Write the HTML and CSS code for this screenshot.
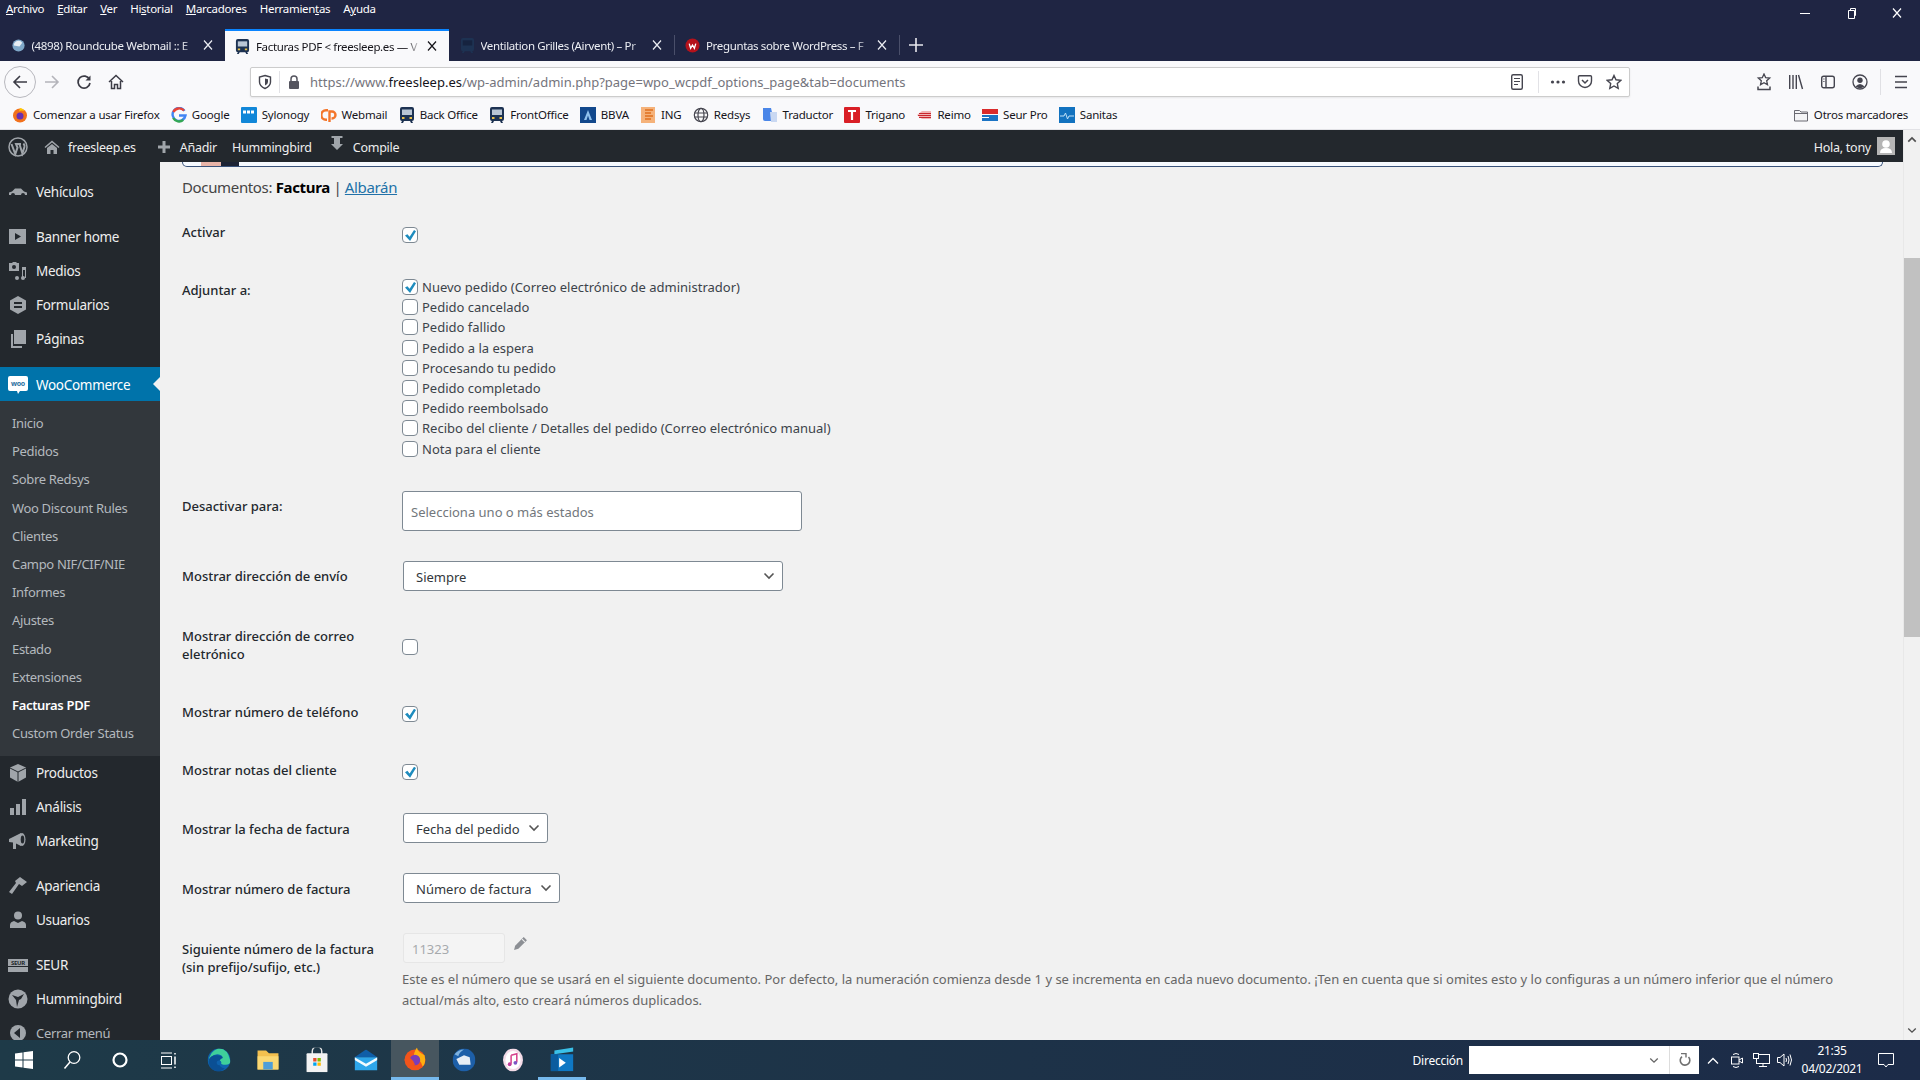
FILE: index.html
```html
<!DOCTYPE html>
<html lang="es">
<head>
  <meta charset="UTF-8">
  <title>Facturas PDF &lt; freesleep.es</title>
  <link rel="stylesheet" href="styles.css">
</head>
<body>
  <svg class="defs" width="0" height="0">
    <symbol id="i-x" viewBox="0 0 12 12"><path d="M2 1.500l8 9M10 1.500l-8 9" fill="none" stroke="currentColor" stroke-width="1.200"/></symbol>
    <symbol id="i-van" viewBox="0 0 16 16"><path d="M3 0h10q2 0 2 2v10q0 2-2 2l1 2h-2l-1-2H5l-1 2H2l1-2q-2 0-2-2V2q0-2 2-2z" fill="#1d3252"/><path d="M3 2.500h10v5.500H3z" fill="#b9c6d6"/><path d="M3 10h2.500v2H3zM10.500 10H13v2h-2.500z" fill="#e9c04a"/></symbol>
    <symbol id="i-van-dim" viewBox="0 0 16 16"><path d="M3 0h10q2 0 2 2v10q0 2-2 2l1 2h-2l-1-2H5l-1 2H2l1-2q-2 0-2-2V2q0-2 2-2z" fill="#1d3252"/><path d="M3 2.500h10v5.500H3z" fill="#16233f"/></symbol>
    <symbol id="i-chev" viewBox="0 0 12 8"><path d="M1.500 1.500L6 6l4.500-4.500" fill="none" stroke="currentColor" stroke-width="1.600"/></symbol>
  </svg>

  <div class="titlebar">
    <div class="menu-row">
      <span><u>A</u>rchivo</span>
      <span><u>E</u>ditar</span>
      <span><u>V</u>er</span>
      <span>Hi<u>s</u>torial</span>
      <span><u>M</u>arcadores</span>
      <span>Herramien<u>t</u>as</span>
      <span>A<u>y</u>uda</span>
      <div class="win-controls">
        <div class="win-btn"><svg width="10" height="10" viewBox="0 0 10 10"><path d="M0 5.500h10" stroke="#fff"/></svg></div>
        <div class="win-btn"><svg width="12" height="12" viewBox="0 0 12 12"><path d="M3.500 3.500h6v8h-6zM5.500 3.500v-2h5v7h-1" fill="none" stroke="#fff"/></svg></div>
        <div class="win-btn"><svg width="12" height="12"><use href="#i-x"/></svg></div>
      </div>
    </div>
    <div class="tab-row">
      <div class="tab">
        <svg class="fav" viewBox="0 0 16 16"><circle cx="8" cy="8" r="6.500" fill="#7fa8c9"/><path d="M3 8a5 5 0 0 1 9-3l-3 4z" fill="#e8eef4"/></svg>
        <span class="tab-title">(4898) Roundcube Webmail :: E</span>
        <svg class="tab-close" width="12" height="12"><use href="#i-x"/></svg>
      </div>
      <div class="tab active">
        <svg class="fav"><use href="#i-van"/></svg>
        <span class="tab-title">Facturas PDF &lt; freesleep.es — V</span>
        <svg class="tab-close" width="12" height="12"><use href="#i-x"/></svg>
      </div>
      <div class="tab">
        <svg class="fav"><use href="#i-van-dim"/></svg>
        <span class="tab-title">Ventilation Grilles (Airvent) – Pr</span>
        <svg class="tab-close" width="12" height="12"><use href="#i-x"/></svg>
      </div>
      <div class="tab-sep"></div>
      <div class="tab">
        <svg class="fav" viewBox="0 0 16 16"><circle cx="8" cy="8" r="7.500" fill="#b5121b"/><path d="M4.500 6l1.500 5 2-3.500 2 3.500 1.500-5" fill="none" stroke="#fff" stroke-width="1.400"/></svg>
        <span class="tab-title">Preguntas sobre WordPress – F</span>
        <svg class="tab-close" width="12" height="12"><use href="#i-x"/></svg>
      </div>
      <div class="tab-sep"></div>
      <svg class="new-tab" width="14" height="14" viewBox="0 0 14 14"><path d="M7 0v14M0 7h14" stroke="#e8e8ee" stroke-width="1.600"/></svg>
    </div>
  </div>

  <div class="toolbar">
    <div class="tb-btn back">
      <svg width="16" height="16" viewBox="0 0 16 16"><path d="M15 8H2M8 2L2 8l6 6" fill="none" stroke="#3b3b45" stroke-width="1.600"/></svg>
    </div>
    <div class="tb-btn">
      <svg width="16" height="16" viewBox="0 0 16 16"><path d="M1 8h13M8 2l6 6-6 6" fill="none" stroke="#b4b4ba" stroke-width="1.600"/></svg>
    </div>
    <div class="tb-btn">
      <svg width="16" height="16" viewBox="0 0 16 16"><path d="M13.500 5.500A6 6 0 1 0 14 9" fill="none" stroke="#3b3b45" stroke-width="1.700"/><path d="M14.500 1.500v5h-5z" fill="#3b3b45"/></svg>
    </div>
    <div class="tb-btn">
      <svg width="16" height="16" viewBox="0 0 16 16"><path d="M1 8l7-6.500L15 8M3.500 7v7.500h3v-4h3v4h3V7" fill="none" stroke="#3b3b45" stroke-width="1.500"/></svg>
    </div>
    <div class="urlbar">
      <svg width="16" height="16" viewBox="0 0 16 16"><path d="M8 1.500l5.500 1.500v5q0 4-5.500 6.500Q2.500 12 2.500 8V3z" fill="none" stroke="#45454f" stroke-width="1.400"/><path d="M8 4.500l3 .8V8q0 2-3 3.500z" fill="#45454f"/></svg>
      <div class="url-sep"></div>
      <svg class="lock" width="14" height="14" viewBox="0 0 14 14"><path d="M4 6V4a3 3 0 0 1 6 0v2" fill="none" stroke="#55555f" stroke-width="1.500"/><rect x="2" y="6" width="10" height="8" rx="1" fill="#55555f"/></svg>
      <span class="url-text">https://www.<b>freesleep.es</b>/wp-admin/admin.php?page=wpo_wcpdf_options_page&amp;tab=documents</span>
      <div class="url-actions">
        <svg width="16" height="18" viewBox="0 0 16 18"><rect x="2.700" y="1.700" width="10.600" height="14.600" rx="1.500" fill="none" stroke="#45454f" stroke-width="1.400"/><path d="M5 5.500h6M5 8.500h6M5 11.500h4" stroke="#45454f" stroke-width="1.200"/></svg>
        <div class="url-sep right"></div>
        <svg class="dots" width="16" height="16" viewBox="0 0 16 16"><g fill="#45454f"><circle cx="2.500" cy="8" r="1.600"/><circle cx="8" cy="8" r="1.600"/><circle cx="13.500" cy="8" r="1.600"/></g></svg>
        <svg class="pocket" width="16" height="16" viewBox="0 0 16 16"><path d="M2.500 1.700h11q1 0 1 1V7a6.500 6.500 0 0 1-13 0V2.700q0-1 1-1z" fill="none" stroke="#45454f" stroke-width="1.400"/><path d="M5 6l3 3 3-3" fill="none" stroke="#45454f" stroke-width="1.500"/></svg>
        <svg class="star" width="16" height="16" viewBox="0 0 16 16"><path d="M8 1.500l2 4.300 4.700.6-3.400 3.200.9 4.700L8 12l-4.200 2.300.9-4.700L1.300 6.400 6 5.800z" fill="none" stroke="#45454f" stroke-width="1.400"/></svg>
      </div>
    </div>
    <div class="tb-right">
      <div class="tb-btn"><svg width="16" height="18" viewBox="0 0 16 18"><path d="M8 1l1.700 3.700 4 .4-3 2.700.8 4L8 9.800l-3.500 2 .8-4-3-2.700 4-.4z" fill="none" stroke="#45454f" stroke-width="1.300"/><path d="M2 13.500v3h12v-3" fill="none" stroke="#45454f" stroke-width="1.500"/></svg></div>
      <div class="tb-btn"><svg width="16" height="16" viewBox="0 0 16 16"><path d="M1.700 1v14M5 1v14M8.300 1v14M10.500 1l4 14" fill="none" stroke="#45454f" stroke-width="1.400"/></svg></div>
      <div class="tb-btn"><svg width="16" height="16" viewBox="0 0 16 16"><rect x="1.700" y="2.200" width="12.600" height="11.600" rx="2" fill="none" stroke="#45454f" stroke-width="1.400"/><path d="M6 2.500v11" stroke="#45454f" stroke-width="1.400"/><path d="M3.300 5h1.200M3.300 7.500h1.200" stroke="#45454f"/></svg></div>
      <div class="tb-btn"><svg width="16" height="16" viewBox="0 0 16 16"><circle cx="8" cy="8" r="7" fill="none" stroke="#45454f" stroke-width="1.300"/><circle cx="8" cy="6.200" r="2.700" fill="#45454f"/><path d="M3.500 12.500q4.500-5 9 0Q8 16 3.500 12.500z" fill="#45454f"/></svg></div>
      <div class="tb-sep"></div>
      <div class="tb-btn"><svg width="16" height="14" viewBox="0 0 16 14"><path d="M2 1.500h12M2 7h12M2 12.500h12" stroke="#45454f" stroke-width="1.600"/></svg></div>
    </div>
  </div>

  <div class="bookmarks">
    <div class="bm"><svg viewBox="0 0 16 16"><circle cx="8" cy="8.500" r="7" fill="#f2711c"/><path d="M8 1q4 1 4 3-3-1-5 .5z" fill="#ffcb00"/><circle cx="8" cy="9" r="3.500" fill="#6a2fb0"/></svg>Comenzar a usar Firefox</div>
    <div class="bm"><svg viewBox="0 0 16 16"><path d="M13.500 3.800A6.500 6.500 0 1 0 14.500 8.500H8" fill="none" stroke="#4285f4" stroke-width="2.400"/><path d="M2.400 5A6.500 6.500 0 0 1 13 3.500" fill="none" stroke="#ea4335" stroke-width="2.400"/><path d="M2.200 11a6.500 6.500 0 0 0 10 1.800" fill="none" stroke="#34a853" stroke-width="2.400"/></svg>Google</div>
    <div class="bm"><svg viewBox="0 0 16 16"><rect width="16" height="16" rx="1" fill="#1187d8"/><path d="M2 5h12" stroke="#fff" stroke-width="3" stroke-dasharray="3 1"/></svg>Sylonogy</div>
    <div class="bm"><svg viewBox="0 0 16 16"><path d="M7 4.500H5a3.500 3.500 0 0 0 0 7h1v2.500H5A6 6 0 0 1 5 2h2z" fill="#f4762b"/><path d="M8.500 15V4.500H11a3 3 0 0 1 0 7h-.5" fill="none" stroke="#f4762b" stroke-width="2.400"/></svg>Webmail</div>
    <div class="bm"><svg><use href="#i-van"/></svg>Back Office</div>
    <div class="bm"><svg><use href="#i-van"/></svg>FrontOffice</div>
    <div class="bm"><svg viewBox="0 0 16 16"><rect width="16" height="16" fill="#12488c"/><path d="M4 13L8 3l4 10H9.500L8 8.500 6.500 13z" fill="#8fc1ee"/></svg>BBVA</div>
    <div class="bm"><svg viewBox="0 0 16 16"><rect x="1" width="14" height="16" fill="#f5b27a"/><path d="M5 3h8M5 6h6M5 9h8M5 12h6" stroke="#e0701e" stroke-width="1.500"/></svg>ING</div>
    <div class="bm"><svg viewBox="0 0 16 16"><g fill="none" stroke="#45454f" stroke-width="1.200"><circle cx="8" cy="8" r="6.700"/><ellipse cx="8" cy="8" rx="3" ry="6.700"/><path d="M1.500 6h13M1.500 10h13"/></g></svg>Redsys</div>
    <div class="bm"><svg viewBox="0 0 16 16"><path d="M1 1h8l3 13H3q-2 0-2-2z" fill="#4a86e8"/><path d="M8 5h7v10H9z" fill="#c9d8f2"/></svg>Traductor</div>
    <div class="bm"><svg viewBox="0 0 16 16"><rect width="16" height="16" rx="1" fill="#d91f26"/><path d="M4 4h8M8 4v9" stroke="#fff" stroke-width="2.200"/></svg>Trigano</div>
    <div class="bm"><svg viewBox="0 0 16 16"><path d="M1 8l5-4h9v8H6z" fill="#f0b4b4"/><path d="M3 6.500h12M2 8.500h13M3 10.500h12" stroke="#c8262c"/></svg>Reimo</div>
    <div class="bm"><svg viewBox="0 0 16 16"><rect y="2" width="16" height="5" fill="#d92b2b"/><rect y="8" width="16" height="6" fill="#1a73c4"/><path d="M0 10.500h7" stroke="#fff"/></svg>Seur Pro</div>
    <div class="bm"><svg viewBox="0 0 16 16"><rect width="16" height="16" fill="#1272bf"/><path d="M1 9h4l1.500-3 2 6 1.500-3h5" fill="none" stroke="#bfe0f7"/></svg>Sanitas</div>
    <div class="bm others"><svg viewBox="0 0 16 16"><path d="M1.500 3.500h5l1.500 1.500h6.500v9h-13z" fill="#f4f4f6" stroke="#6a6a72"/><path d="M1.500 6.500h13" stroke="#6a6a72"/></svg>Otros marcadores</div>
  </div>

  <div class="wp-area">
    <div class="wp-page">
      <div class="adminbar">
        <svg class="ab-logo" width="20" height="20" viewBox="0 0 20 20"><circle cx="10" cy="10" r="9" fill="none" stroke="#a0a5aa" stroke-width="1.500"/><path d="M3.500 7l3.800 10 2.200-6.500L8 7h5l-1.600 0 3 9.500 2-6.500q.5-2-1-3.500" fill="none" stroke="#a0a5aa" stroke-width="2"/></svg>
        <svg class="ab-home" width="16" height="16" viewBox="0 0 16 16"><path d="M0.500 8L8 1.500 15.500 8l-1 1L8 3.500 1.500 9z" fill="#a0a5aa"/><path d="M3 9l5-4 5 4v6h-3.500v-4h-3v4H3z" fill="#a0a5aa"/></svg>
        <span class="ab-site">freesleep.es</span>
        <svg class="ab-plus" width="14" height="14" viewBox="0 0 14 14"><path d="M7 1v12M1 7h12" stroke="#a0a5aa" stroke-width="3"/></svg>
        <span class="ab-new">Añadir</span>
        <span class="ab-hb">Hummingbird</span>
        <svg class="ab-pin" width="14" height="18" viewBox="0 0 14 18"><path d="M1.500 1h11v2h-11zM4 3h6v6h3l-6 6-6-6h3z" fill="#a0a5aa"/></svg>
        <span class="ab-compile">Compile</span>
        <span class="ab-hello">Hola, tony</span>
        <div class="ab-avatar"><svg width="18" height="18" viewBox="0 0 18 18"><rect width="18" height="18" fill="#b5b5b5"/><circle cx="9" cy="7" r="3.800" fill="#fff"/><path d="M3 16q0-5 6-5t6 5z" fill="#fff"/></svg></div>
      </div>

      <div class="wp-body">
        <nav class="sidebar">
          <a class="side-item sep-after"><svg viewBox="0 0 20 20"><path d="M1 13v-2.500l3-1 3-3h6l3 3 3 1V13h-2a2 2 0 0 0-4 0H7a2 2 0 0 0-4 0z" fill="#a0a5aa"/></svg>Vehículos</a>
          <a class="side-item"><svg viewBox="0 0 20 20"><rect x="1" y="2" width="17" height="15" fill="#a0a5aa"/><path d="M7 6l6 3.500-6 3.500z" fill="#23282d"/></svg>Banner home</a>
          <a class="side-item"><svg viewBox="0 0 20 20"><path d="M1 2h3l1-1h3l1 1h2v8H1z" fill="#a0a5aa"/><circle cx="6" cy="6" r="2" fill="#23282d"/><path d="M14 6h4v11h-1v-8h-2v8h-1z" fill="#a0a5aa"/><circle cx="15" cy="17" r="2" fill="#a0a5aa"/><circle cx="9" cy="17" r="2" fill="#a0a5aa"/></svg>Medios</a>
          <a class="side-item"><svg viewBox="0 0 20 20"><path d="M10 1l8 4.500v9L10 19l-8-4.500v-9z" fill="#a0a5aa"/><path d="M6 8h8M6 12h8" stroke="#23282d" stroke-width="2"/></svg>Formularios</a>
          <a class="side-item sep-after"><svg viewBox="0 0 20 20"><path d="M6 1h12v14H6z" fill="#a0a5aa"/><path d="M3 5v14h11v-2H5V5z" fill="#a0a5aa"/></svg>Páginas</a>
          <a class="side-item current">
            <svg viewBox="0 0 20 20"><path d="M2 1h16q2 0 2 2v11q0 2-2 2h-6l-2 3-1-3H2q-2 0-2-2V3q0-2 2-2z" fill="#fff"/><text x="10" y="11" class="woo-text">woo</text></svg>WooCommerce
          </a>
          <ul class="submenu">
            <li>Inicio</li>
            <li>Pedidos</li>
            <li>Sobre Redsys</li>
            <li>Woo Discount Rules</li>
            <li>Clientes</li>
            <li>Campo NIF/CIF/NIE</li>
            <li>Informes</li>
            <li>Ajustes</li>
            <li>Estado</li>
            <li>Extensiones</li>
            <li class="on">Facturas PDF</li>
            <li>Custom Order Status</li>
          </ul>
          <a class="side-item"><svg viewBox="0 0 20 20"><path d="M10 1l8 3.500v10L10 19l-8-4.500v-10z" fill="#a0a5aa"/><path d="M2 5l8 4 8-4M10 9v10" fill="none" stroke="#23282d"/></svg>Productos</a>
          <a class="side-item"><svg viewBox="0 0 20 20"><path d="M2 11h4v7H2zM8 7h4v11H8zM14 2h4v16h-4z" fill="#a0a5aa"/></svg>Análisis</a>
          <a class="side-item sep-after"><svg viewBox="0 0 20 20"><path d="M1 8l12-6v13L8 12.500V18H5v-6.500L1 11z" fill="#a0a5aa"/><ellipse cx="14" cy="8.500" rx="3.500" ry="6.500" fill="#a0a5aa"/><ellipse cx="14.500" cy="8.500" rx="1.800" ry="4" fill="#23282d"/></svg>Marketing</a>
          <a class="side-item"><svg viewBox="0 0 20 20"><path d="M12 1l7 5-5 4-3-2-7 10-3-2 7-9-1-2z" fill="#a0a5aa"/></svg>Apariencia</a>
          <a class="side-item sep-after"><svg viewBox="0 0 20 20"><circle cx="10" cy="5.500" r="4" fill="#a0a5aa"/><path d="M2 18v-3q0-3 4-4l4 2 4-2q4 1 4 4v3z" fill="#a0a5aa"/></svg>Usuarios</a>
          <a class="side-item"><svg viewBox="0 0 20 20"><rect y="4" width="20" height="7" fill="#a0a5aa"/><rect y="12" width="20" height="5" fill="#a0a5aa"/><text x="10" y="10" class="seur-text">SEUR</text></svg>SEUR</a>
          <a class="side-item"><svg viewBox="0 0 20 20"><circle cx="10" cy="10" r="9.500" fill="#a0a5aa"/><path d="M4 6l6 2 6-3-3 5-2 1-2 7-1-7z" fill="#23282d"/></svg>Hummingbird</a>
          <a class="side-item collapse"><svg viewBox="0 0 20 20"><circle cx="10" cy="10" r="8" fill="#a0a5aa"/><path d="M12 5v10l-6-5z" fill="#23282d"/></svg>Cerrar menú</a>
        </nav>

        <main class="content">
          <div class="notice"><span class="notice-pink"></span><span class="notice-dark"></span></div>
          <p class="doc-switch">Documentos: <b>Factura</b> | <a href="#">Albarán</a></p>

          <form class="settings">
            <div class="row">
              <label class="row-label">Activar</label>
              <div class="cell check-cell"><input type="checkbox" checked></div>
            </div>
            <div class="row">
              <label class="row-label">Adjuntar a:</label>
              <div class="cell attach-list">
                <label><input type="checkbox" checked>Nuevo pedido (Correo electrónico de administrador)</label>
                <label><input type="checkbox">Pedido cancelado</label>
                <label><input type="checkbox">Pedido fallido</label>
                <label><input type="checkbox">Pedido a la espera</label>
                <label><input type="checkbox">Procesando tu pedido</label>
                <label><input type="checkbox">Pedido completado</label>
                <label><input type="checkbox">Pedido reembolsado</label>
                <label><input type="checkbox">Recibo del cliente / Detalles del pedido (Correo electrónico manual)</label>
                <label><input type="checkbox">Nota para el cliente</label>
              </div>
            </div>
            <div class="row">
              <label class="row-label">Desactivar para:</label>
              <div class="cell multi-cell"><input class="multi" type="text" placeholder="Selecciona uno o más estados"></div>
            </div>
            <div class="row low">
              <label class="row-label">Mostrar dirección de envío</label>
              <div class="cell">
                <div class="select w-380"><select><option>Siempre</option></select><svg width="12" height="8"><use href="#i-chev"/></svg></div>
              </div>
            </div>
            <div class="row low">
              <label class="row-label">Mostrar dirección de correo<br>eletrónico</label>
              <div class="cell check-cell"><input type="checkbox"></div>
            </div>
            <div class="row low">
              <label class="row-label">Mostrar número de teléfono</label>
              <div class="cell check-cell"><input type="checkbox" checked></div>
            </div>
            <div class="row low">
              <label class="row-label">Mostrar notas del cliente</label>
              <div class="cell check-cell"><input type="checkbox" checked></div>
            </div>
            <div class="row lower">
              <label class="row-label">Mostrar la fecha de factura</label>
              <div class="cell">
                <div class="select w-145"><select><option>Fecha del pedido</option></select><svg width="12" height="8"><use href="#i-chev"/></svg></div>
              </div>
            </div>
            <div class="row lower">
              <label class="row-label">Mostrar número de factura</label>
              <div class="cell">
                <div class="select w-157"><select><option>Número de factura</option></select><svg width="12" height="8"><use href="#i-chev"/></svg></div>
              </div>
            </div>
            <div class="row lower">
              <label class="row-label">Siguiente número de la factura<br>(sin prefijo/sufijo, etc.)</label>
              <div class="cell">
                <div class="next-number">
                  <input type="text" value="11323" disabled>
                  <svg width="15" height="15" viewBox="0 0 14 14"><path d="M10 1l3 3-8 8-4 1 1-4z" fill="#8c8f94"/><path d="M8.500 3l2.500 2.500" stroke="#f1f1f1"/></svg>
                </div>
                <p class="desc">Este es el número que se usará en el siguiente documento. Por defecto, la numeración comienza desde 1 y se incrementa en cada nuevo documento. ¡Ten en cuenta que si omites esto y lo configuras a un número inferior que el número<br>actual/más alto, esto creará números duplicados.</p>
              </div>
            </div>
          </form>
        </main>
      </div>
    </div>

    <div class="scrollbar">
      <svg class="sb-arrow" width="10" height="7" viewBox="0 0 12 8"><path d="M1.500 6.500L6 2l4.500 4.500" fill="none" stroke="#505050" stroke-width="2"/></svg>
      <div class="sb-thumb"></div>
      <svg class="sb-arrow down" width="10" height="7"><use href="#i-chev"/></svg>
    </div>
  </div>

  <footer class="taskbar">
    <div class="task-slot"><svg width="18" height="18" viewBox="0 0 18 18"><path d="M0 2.500l7.500-1v7H0zM8.500 1.300L18 0v8.500H8.500zM0 9.500h7.500v7l-7.500-1zM8.500 9.500H18V18l-9.500-1.300z" fill="#fff"/></svg></div>
    <div class="task-slot"><svg width="18" height="20" viewBox="0 0 18 20"><circle cx="11" cy="7.500" r="5.800" fill="none" stroke="#fff" stroke-width="1.300"/><path d="M7 12L1.500 18.500" stroke="#fff" stroke-width="1.500"/></svg></div>
    <div class="task-slot"><svg width="16" height="16" viewBox="0 0 16 16"><circle cx="8" cy="8" r="6.500" fill="none" stroke="#fff" stroke-width="2.200"/></svg></div>
    <div class="task-slot"><svg width="17" height="17" viewBox="0 0 17 17"><path d="M1 1h11M1 16h11" stroke="#fff"/><rect x="1.500" y="4.500" width="10" height="8" fill="none" stroke="#fff"/><path d="M15 1v1.500M15 4.500v8M15 14.500V16" stroke="#fff" stroke-width="1.500"/></svg></div>
    <div class="task-apps">
      <div class="task-slot app"><svg width="24" height="24" viewBox="0 0 24 24"><circle cx="12" cy="12" r="12" fill="#0e62ad"/><path d="M24 13q0 4-5 4-5 0-6-3t3-5q-2-3-6-3-7 1-9 8Q2 3 11 0q10-1 13 13z" fill="#3fcf9a"/><path d="M1 13q1-6 8-6 6 0 7 3-4 1-4 5 0 5 6 6-3 3-8 3-8-1-9-11z" fill="#0a4f94"/><circle cx="12" cy="15" r="2.500" fill="#0e62ad"/></svg></div>
      <div class="task-slot app"><svg width="24" height="22" viewBox="0 0 24 22"><path d="M1 1h9l3 3h10v17H1z" fill="#f3c04f"/><path d="M1 7h22v14H1z" fill="#fbd873"/><rect x="7" y="13" width="10" height="8" fill="#4f9ed8"/></svg></div>
      <div class="task-slot app"><svg width="24" height="26" viewBox="0 0 24 26"><path d="M7 7V4a5 5 0 0 1 10 0v3" fill="none" stroke="#e8e8e8" stroke-width="1.500"/><rect x="1" y="6" width="22" height="20" rx="1" fill="#f3f3f3"/><path d="M8 11h3.500v3.500H8z" fill="#e74c2e"/><path d="M12.500 11H16v3.500h-3.500z" fill="#7fba00"/><path d="M8 15.500h3.500V19H8z" fill="#00a4ef"/><path d="M12.500 15.500H16V19h-3.500z" fill="#ffb900"/></svg></div>
      <div class="task-slot app"><svg width="24" height="22" viewBox="0 0 24 22"><path d="M12 0l12 8H0z" fill="#0f5ea8"/><path d="M0 8h24v14H0z" fill="#2ea6ea"/><path d="M0 8l12 7 12-7v3l-12 7-12-7z" fill="#f2fbff"/></svg></div>
      <div class="task-slot app active"><svg width="24" height="24" viewBox="0 0 24 24"><circle cx="12" cy="13" r="11" fill="#f2541b"/><path d="M14 0q1 5 8 8 2 8-2 12-2-8-9-9-1-5 3-11z" fill="#ffb00f"/><circle cx="12" cy="13" r="5.500" fill="#7a3db8"/><path d="M1 13q2-6 6-7-2 4 1 6t4 6q-5 2-9-1z" fill="#f2541b"/></svg></div>
      <div class="task-slot app"><svg width="24" height="24" viewBox="0 0 24 24"><circle cx="12" cy="12" r="12" fill="#1d5fa8"/><path d="M4 11l8-4 6 2 1 8H7z" fill="#e6edf5"/><path d="M2 6q4-5 10-5-5 3-6 7z" fill="#7fb2de"/></svg></div>
      <div class="task-slot app"><svg width="22" height="24" viewBox="0 0 22 24"><ellipse cx="11" cy="12" rx="10.500" ry="12" fill="#f4dce8"/><ellipse cx="11" cy="12" rx="8" ry="9.500" fill="#fff"/><path d="M9 7l6-1.500v9M9 7v9" fill="none" stroke="#d6418c" stroke-width="1.600"/><circle cx="7.500" cy="16.500" r="2" fill="#c13a9a"/><circle cx="13.500" cy="15" r="2" fill="#7a55c4"/></svg></div>
      <div class="task-slot app active"><svg width="24" height="26" viewBox="0 0 24 26"><path d="M4 4l20-3v4L4 8z" fill="#3ac0e8"/><rect y="8" width="24" height="18" fill="#0f78c4"/><path d="M0 8h8v18H0z" fill="#0b5c9e"/><path d="M9 12l7 5-7 5z" fill="#fff"/></svg></div>
    </div>
    <div class="tray">
      <span class="tray-label">Dirección</span>
      <div class="address">
        <svg class="addr-chev" width="10" height="7"><use href="#i-chev"/></svg>
        <div class="addr-reload"><svg width="12" height="14" viewBox="0 0 12 14"><path d="M9.500 4A4.800 4.800 0 1 1 3 3.600" fill="none" stroke="#707070" stroke-width="1.600"/><path d="M2 .5h5v4" fill="none" stroke="#707070" stroke-width="1.400"/></svg></div>
      </div>
      <div class="tray-icon"><svg width="12" height="7" viewBox="0 0 12 7"><path d="M1 6.500L6 1.500l5 5" fill="none" stroke="#fff" stroke-width="1.300"/></svg></div>
      <div class="tray-icon"><svg width="12" height="17" viewBox="0 0 12 17"><rect x=".5" y="5" width="7.500" height="7" fill="none" stroke="#fff"/><path d="M8 8l3.500-2v5L8 9M2 2.500q3-2 6 0M2 14.500q3 2 6 0" fill="none" stroke="#fff"/></svg></div>
      <div class="tray-icon"><svg width="17" height="14" viewBox="0 0 17 14"><rect x="3.500" y="1.500" width="13" height="9" fill="none" stroke="#fff"/><rect x=".5" y=".5" width="5" height="5" fill="#1b2b47" stroke="#fff"/><path d="M10 10.500v3M6 13.500h8" stroke="#fff"/></svg></div>
      <div class="tray-icon"><svg width="16" height="14" viewBox="0 0 16 14"><path d="M.5 4.500H3L7 1v12L3 9.500H.5z" fill="none" stroke="#fff"/><path d="M9 5q1 2 0 4M11 3q2 4 0 8M13 1.500q3 5.500 0 11" fill="none" stroke="#fff"/></svg></div>
      <div class="clock"><span>21:35</span><span>04/02/2021</span></div>
      <div class="notif"><svg width="16" height="15" viewBox="0 0 16 15"><path d="M.5.500h15v11H10l-2 2.500-2-2.500H.5z" fill="none" stroke="#fff"/></svg></div>
    </div>
  </footer>
</body>
</html>
```

FILE: styles.css
```css
:root {
  --title-bg: #1f2543;
  --toolbar-bg: #f9f9fb;
  --wp-dark: #23282d;
  --wp-sub: #32373c;
  --wp-blue: #0073aa;
  --wp-bg: #f1f1f1;
  --text: #23282d;
  --sans: "Noto Sans", "Open Sans", sans-serif;
}

* {
  box-sizing: border-box;
}

html, body {
  height: 100%;
}

body {
  margin: 0;
  display: flex;
  flex-direction: column;
  height: 1080px;
  overflow: hidden;
  font-family: var(--sans);
  font-size: 13px;
  color: var(--text);
  background: var(--wp-bg);
}

.defs {
  position: absolute;
}

svg {
  display: block;
  flex: none;
}

/* title bar + tabs */
.titlebar {
  height: 61px;
  flex: none;
  background: var(--title-bg);
  color: #fff;
  font-size: 11.5px;
}

.menu-row {
  height: 29px;
  display: flex;
  align-items: flex-start;
  gap: 13px;
  padding: 1px 0 0 6px;
  letter-spacing: -0.3px;
}

.win-controls {
  margin-left: auto;
  display: flex;
}

.win-btn {
  width: 46px;
  height: 24px;
  display: flex;
  align-items: center;
  justify-content: center;
}

.tab-row {
  height: 32px;
  display: flex;
  align-items: center;
  letter-spacing: -0.35px;
}

.tab {
  width: 224.5px;
  height: 32px;
  flex: none;
  display: flex;
  align-items: center;
  padding: 0 11px 0 10.5px;
  color: #eceef3;
}

.tab.active {
  background: var(--toolbar-bg);
  color: #15141a;
  border-top: 2px solid #0a84ff;
}

.fav {
  width: 15px;
  height: 15px;
  margin-right: 6px;
}

.tab-title {
  flex: 1;
  min-width: 0;
  white-space: nowrap;
  overflow: hidden;
  -webkit-mask-image: linear-gradient(to right, #000 90%, transparent);
  mask-image: linear-gradient(to right, #000 90%, transparent);
}

.tab-close {
  margin-left: 4px;
}

.tab-sep {
  width: 1px;
  height: 20px;
  background: #4a4f6a;
  flex: none;
}

.new-tab {
  margin-left: 9px;
}

/* nav toolbar */
.toolbar {
  height: 38px;
  flex: none;
  background: var(--toolbar-bg);
  display: flex;
  align-items: center;
  padding: 3px 0 0 4px;
}

.tb-btn {
  width: 32px;
  height: 32px;
  flex: none;
  display: flex;
  align-items: center;
  justify-content: center;
}

.tb-btn.back {
  border: 1px solid #b8b8be;
  border-radius: 50%;
}

.urlbar {
  width: 1380px;
  height: 30px;
  margin-left: 118px;
  flex: none;
  display: flex;
  align-items: center;
  padding: 0 7px 0 6px;
  background: #fff;
  border: 1px solid #ccc;
  border-radius: 2px;
  box-shadow: 0 1px 2px rgba(0,0,0,.08);
}

.url-sep {
  width: 1px;
  height: 22px;
  margin-left: 6px;
  background: #e2e2e6;
}

.url-sep.right {
  margin-left: 13px;
}

.lock {
  margin-left: 7px;
}

.url-text {
  margin-left: 9px;
  font-size: 13px;
  color: #74747c;
  white-space: nowrap;
}

.url-text b {
  color: #15141a;
  font-weight: 400;
}

.url-actions {
  margin-left: auto;
  display: flex;
  align-items: center;
}

.dots {
  margin-left: 11px;
}

.pocket {
  margin-left: 11px;
}

.star {
  margin-left: 13px;
}

.tb-right {
  margin-left: auto;
  padding-right: 3px;
  display: flex;
  align-items: center;
}

.tb-sep {
  width: 1px;
  height: 26px;
  margin: 0 4px;
  background: #e0e0e4;
}

/* bookmarks */
.bookmarks {
  height: 31px;
  flex: none;
  background: var(--toolbar-bg);
  border-bottom: 1px solid #e2e2e6;
  display: flex;
  align-items: center;
  padding: 1px 12px 0;
  gap: 11.3px;
  font-size: 11.5px;
  color: #15141a;
  letter-spacing: -0.2px;
  white-space: nowrap;
}

.bm {
  display: flex;
  align-items: center;
  gap: 5px;
}

.bm svg {
  width: 16px;
  height: 16px;
}

.bm.others {
  margin-left: auto;
}

/* wordpress area */
.wp-area {
  flex: 1;
  min-height: 0;
  display: flex;
}

.wp-page {
  flex: 1;
  min-width: 0;
  display: flex;
  flex-direction: column;
}

.adminbar {
  height: 32px;
  flex: none;
  background: var(--wp-dark);
  color: #eee;
  display: flex;
  align-items: center;
  padding: 2px 0 0 8px;
  font-size: 12.5px;
  letter-spacing: -0.25px;
}

.ab-home { margin-left: 16px; }
.ab-site { margin-left: 8px; }
.ab-plus { margin-left: 21px; }
.ab-new { margin-left: 9px; }
.ab-hb { margin-left: 15px; }
.ab-pin { margin-left: 18px; margin-top: -6px; }
.ab-compile { margin-left: 9px; }
.ab-hello { margin-left: auto; }

.ab-avatar {
  margin: -2px 8px 0 6px;
}

.wp-body {
  flex: 1;
  min-height: 0;
  display: flex;
}

.sidebar {
  width: 160px;
  flex: none;
  background: var(--wp-dark);
  padding-top: 13px;
  overflow: hidden;
}

.side-item {
  height: 34px;
  display: flex;
  align-items: center;
  padding-left: 8px;
  font-size: 13.5px;
  color: #eee;
  letter-spacing: -0.3px;
  white-space: nowrap;
}

.side-item svg {
  width: 20px;
  height: 20px;
  margin-right: 8px;
}

.sep-after {
  margin-bottom: 11px;
}

.side-item.current {
  position: relative;
  padding-top: 1px;
  background: var(--wp-blue);
  color: #fff;
}

.side-item.current::after {
  content: "";
  position: absolute;
  right: 0;
  top: 10px;
  border: 7px solid transparent;
  border-right-color: var(--wp-bg);
  border-left-width: 0;
}

.woo-text {
  font: 700 7px var(--sans);
  fill: #2a6f9e;
  text-anchor: middle;
}

.seur-text {
  font: 700 6px var(--sans);
  fill: #23282d;
  text-anchor: middle;
}

.side-item.collapse {
  color: #b4b9be;
  font-size: 13px;
}

.submenu {
  list-style: none;
  margin: 0;
  padding: 8px 0 8.5px;
  background: var(--wp-sub);
  color: #b4b9be;
  font-size: 13px;
  letter-spacing: -0.33px;
}

.submenu li {
  height: 28.2px;
  line-height: 28px;
  padding-left: 12px;
  white-space: nowrap;
}

.submenu .on {
  color: #fff;
  font-weight: 600;
}

/* content */
.content {
  flex: 1;
  min-width: 0;
  padding: 0 14px 0 22px;
  overflow: hidden;
}

.notice {
  height: 5px;
  display: flex;
  padding-left: 18px;
  background: #f6faff;
  border: 1px solid #39527a;
  border-top: 0;
  border-radius: 0 0 5px 5px;
  margin-right: 6px;
}

.notice-pink {
  width: 20px;
  background: #e8b4a8;
}

.notice-dark {
  width: 18px;
  background: #1c2233;
}

.doc-switch {
  margin: 10px 0 6px;
  font-size: 15px;
  line-height: 20px;
  color: #444;
  letter-spacing: -0.35px;
}

.doc-switch b {
  color: #000;
}

.doc-switch a {
  color: #2271a8;
}

.row {
  display: grid;
  grid-template-columns: 220px 1fr;
}

.row-label {
  padding: 20px 0;
  line-height: 18px;
  font-weight: 500;
  white-space: nowrap;
}

.row.low .row-label {
  padding: 21px 0 19px;
}

.row.lower .row-label {
  padding: 22px 0 18px;
}

.cell {
  padding: 15px 0 15px 1px;
}

.check-cell {
  padding: 6px 0 0;
  align-self: center;
}

input[type="checkbox"] {
  appearance: none;
  width: 16px;
  height: 16px;
  margin: 0;
  flex: none;
  display: block;
  position: relative;
  background: #fff;
  border: 1px solid #7e8993;
  border-radius: 4px;
}

input[type="checkbox"]:checked::before {
  content: "";
  position: absolute;
  inset: 2px 1px 1px 2px;
  background: #1e8cbe;
  clip-path: polygon(0 50%, 22% 38%, 42% 62%, 82% 0, 100% 12%, 46% 100%);
}

.attach-list {
  padding: 18px 0 16px;
}

.attach-list label {
  height: 20.2px;
  display: flex;
  gap: 4px;
  line-height: 17px;
  color: #3c434a;
  white-space: nowrap;
}

.multi-cell {
  padding: 14px 0 15px;
}

.multi {
  width: 400px;
  height: 40px;
  display: block;
  padding: 2px 8px 0;
  background: #fff;
  border: 1px solid #7e8993;
  border-radius: 3px;
  font: 13px var(--sans);
}

.multi::placeholder {
  color: #72777c;
}

.select {
  position: relative;
  height: 30px;
}

.w-380 { width: 380px; }
.w-145 { width: 145px; }
.w-157 { width: 157px; }

.select select {
  appearance: none;
  width: 100%;
  height: 30px;
  display: block;
  padding: 2px 24px 0 12px;
  background: #fff;
  border: 1px solid #7e8993;
  border-radius: 3px;
  font: 13px var(--sans);
  color: #32373c;
}

.select svg {
  position: absolute;
  right: 8px;
  top: 11px;
  color: #555;
}

.next-number {
  display: flex;
  align-items: flex-start;
  gap: 8px;
}

.next-number input {
  width: 102px;
  height: 30px;
  padding: 2px 8px 0;
  background: #f4f4f4;
  border: 1px solid #e6e6e6;
  border-radius: 3px;
  font: 13px var(--sans);
  color: #a7aaad;
}

.next-number svg {
  margin-top: 3px;
}

.desc {
  margin: 6px 0 0 -1px;
  font-size: 13px;
  line-height: 21px;
  color: #666;
  white-space: nowrap;
}

/* page scrollbar */
.scrollbar {
  width: 17px;
  flex: none;
  background: #f1f1f1;
  border-left: 1px solid #e8e8e8;
  display: flex;
  flex-direction: column;
  align-items: center;
  position: relative;
}

.sb-arrow {
  margin-top: 6px;
}

.sb-arrow.down {
  margin-top: auto;
  margin-bottom: 6px;
  color: #505050;
}

.sb-thumb {
  position: absolute;
  left: 0;
  right: 0;
  top: 128px;
  height: 379px;
  background: #c1c1c1;
}

/* windows taskbar */
.taskbar {
  height: 40px;
  flex: none;
  display: flex;
  align-items: center;
  background: linear-gradient(to right, #1e3a48, #1c2b48);
  color: #fff;
}

.task-slot {
  width: 48px;
  height: 40px;
  flex: none;
  display: flex;
  align-items: center;
  justify-content: center;
}

.task-apps {
  margin-left: 3px;
  display: flex;
  gap: 1px;
}

.task-slot.active {
  border-bottom: 3px solid #76b9ed;
}

.task-apps .task-slot:nth-child(5) {
  background: #47565f;
}

.task-slot.app svg {
  transform: scale(.95);
}

.tray {
  margin-left: auto;
  display: flex;
  align-items: center;
  padding-right: 10px;
}

.tray-label {
  margin-right: 6px;
  font-size: 12px;
  letter-spacing: -0.25px;
}

.address {
  width: 230px;
  height: 28px;
  display: flex;
  align-items: center;
  justify-content: flex-end;
  background: #fff;
  color: #666;
}

.addr-chev {
  margin-right: 10px;
}

.addr-reload {
  width: 30px;
  height: 100%;
  display: flex;
  align-items: center;
  justify-content: center;
  border-left: 1px solid #ddd;
}

.tray-icon {
  width: 24px;
  height: 40px;
  display: flex;
  align-items: center;
  justify-content: center;
}

.address + .tray-icon {
  margin-left: 2px;
}

.clock {
  width: 60px;
  margin-left: 5px;
  display: flex;
  flex-direction: column;
  align-items: center;
  font-size: 12px;
  line-height: 18px;
  letter-spacing: -0.3px;
}

.notif {
  width: 48px;
  display: flex;
  justify-content: center;
}
```
